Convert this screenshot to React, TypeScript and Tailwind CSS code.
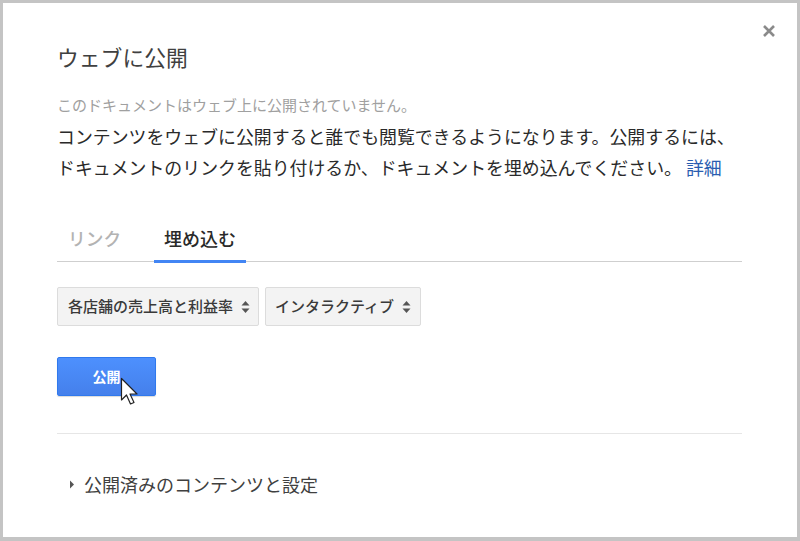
const font = { fontFamily: "'Noto Sans CJK JP', 'Noto Sans', sans-serif" };

function Sorter() {
  return (
    <svg width="9" height="14" viewBox="0 0 9 14" className="ml-[8px] shrink-0">
      <path d="M4.5 1 L8.5 5.5 H0.5 Z" fill="#555" />
      <path d="M4.5 13 L8.5 8.5 H0.5 Z" fill="#555" />
    </svg>
  );
}

function Cursor() {
  return (
    <svg
      width="20"
      height="30"
      viewBox="0 0 20 30"
      className="absolute left-[63px] top-[20px] pointer-events-none"
    >
      <path
        d="M1.5 1.5 V23 L6.5 18 L10.5 27 L14 25.5 L10 17 H17 Z"
        fill="#fff"
        stroke="#222"
        strokeWidth="1.2"
        strokeLinejoin="round"
      />
    </svg>
  );
}

export default function App() {
  return (
    <div className="w-[800px] h-[541px] bg-white border-[3px] border-b-[4px] border-[#c4c4c4] relative" style={font}>
      {/* Close button */}
      <svg
        width="14"
        height="14"
        viewBox="0 0 14 14"
        className="absolute right-[21px] top-[21px]"
      >
        <path d="M2 2 L12 12 M12 2 L2 12" stroke="#8a8a8a" strokeWidth="2.6" />
      </svg>

      <div className="pl-[54px] pr-[55px] pt-[40px] flex flex-col">
        <h1 className="text-[21.8px] leading-[28px] text-[#404040]">ウェブに公開</h1>

        <p className="mt-[24px] text-[15px] leading-[20px] text-[#a0a0a0]">
          このドキュメントはウェブ上に公開されていません。
        </p>

        <p className="mt-[6px] text-[17.9px] leading-[31px] text-[#2a2a2a] whitespace-nowrap">
          コンテンツをウェブに公開すると誰でも閲覧できるようになります。公開するには、
          <br />
          ドキュメントのリンクを貼り付けるか、ドキュメントを埋め込んでください。
          <span className="text-[#2a5db0]"> 詳細</span>
        </p>

        {/* Tabs */}
        <div className="mt-[33px] flex border-b border-[#cfcfcf]">
          <div className="px-[11px] pt-[10px] pb-[10px] -mb-[2px] border-b-[3px] border-transparent text-[17.7px] leading-[24px] text-[#b3b3b3] font-medium">
            リンク
          </div>
          <div className="ml-[22px] px-[10px] pt-[10px] pb-[10px] -mb-[2px] border-b-[3px] border-[#4285f4] text-[18px] leading-[24px] text-[#2a2a2a] font-medium">
            埋め込む
          </div>
        </div>

        {/* Selects */}
        <div className="mt-[25px] flex gap-[6px]">
          <div className="h-[39px] w-[202px] flex items-center pl-[10px] pr-[10px] bg-[#f3f3f3] border border-[#dcdcdc] rounded-[2px] text-[15px] text-[#3a3a3a] font-medium">
            <span className="whitespace-nowrap">各店舗の売上高と利益率</span>
            <Sorter />
          </div>
          <div className="h-[39px] w-[156px] flex items-center pl-[9px] pr-[10px] bg-[#f3f3f3] border border-[#dcdcdc] rounded-[2px] text-[15px] text-[#3a3a3a] font-medium">
            <span className="whitespace-nowrap">インタラクティブ</span>
            <Sorter />
          </div>
        </div>

        {/* Publish button */}
        <div className="mt-[31px] relative w-[99px]">
          <button className="w-[99px] h-[39px] rounded-[2px] border border-[#3079ed] bg-gradient-to-b from-[#4d90fe] to-[#4580eb] text-white text-[14px] font-bold shadow-[0_1px_1px_rgba(0,0,0,0.15)]">
            公開
          </button>
          <Cursor />
        </div>

        <div className="mt-[37px] h-px bg-[#e6e6e6]" />

        <div className="mt-[38px] flex items-center text-[18px] leading-[24px] text-[#404040]">
          <svg width="6" height="9" viewBox="0 0 6 9" className="ml-[12px] mr-[9px]">
            <path d="M1 0.5 L5 4.5 L1 8.5 Z" fill="#555" />
          </svg>
          公開済みのコンテンツと設定
        </div>
      </div>
    </div>
  );
}
